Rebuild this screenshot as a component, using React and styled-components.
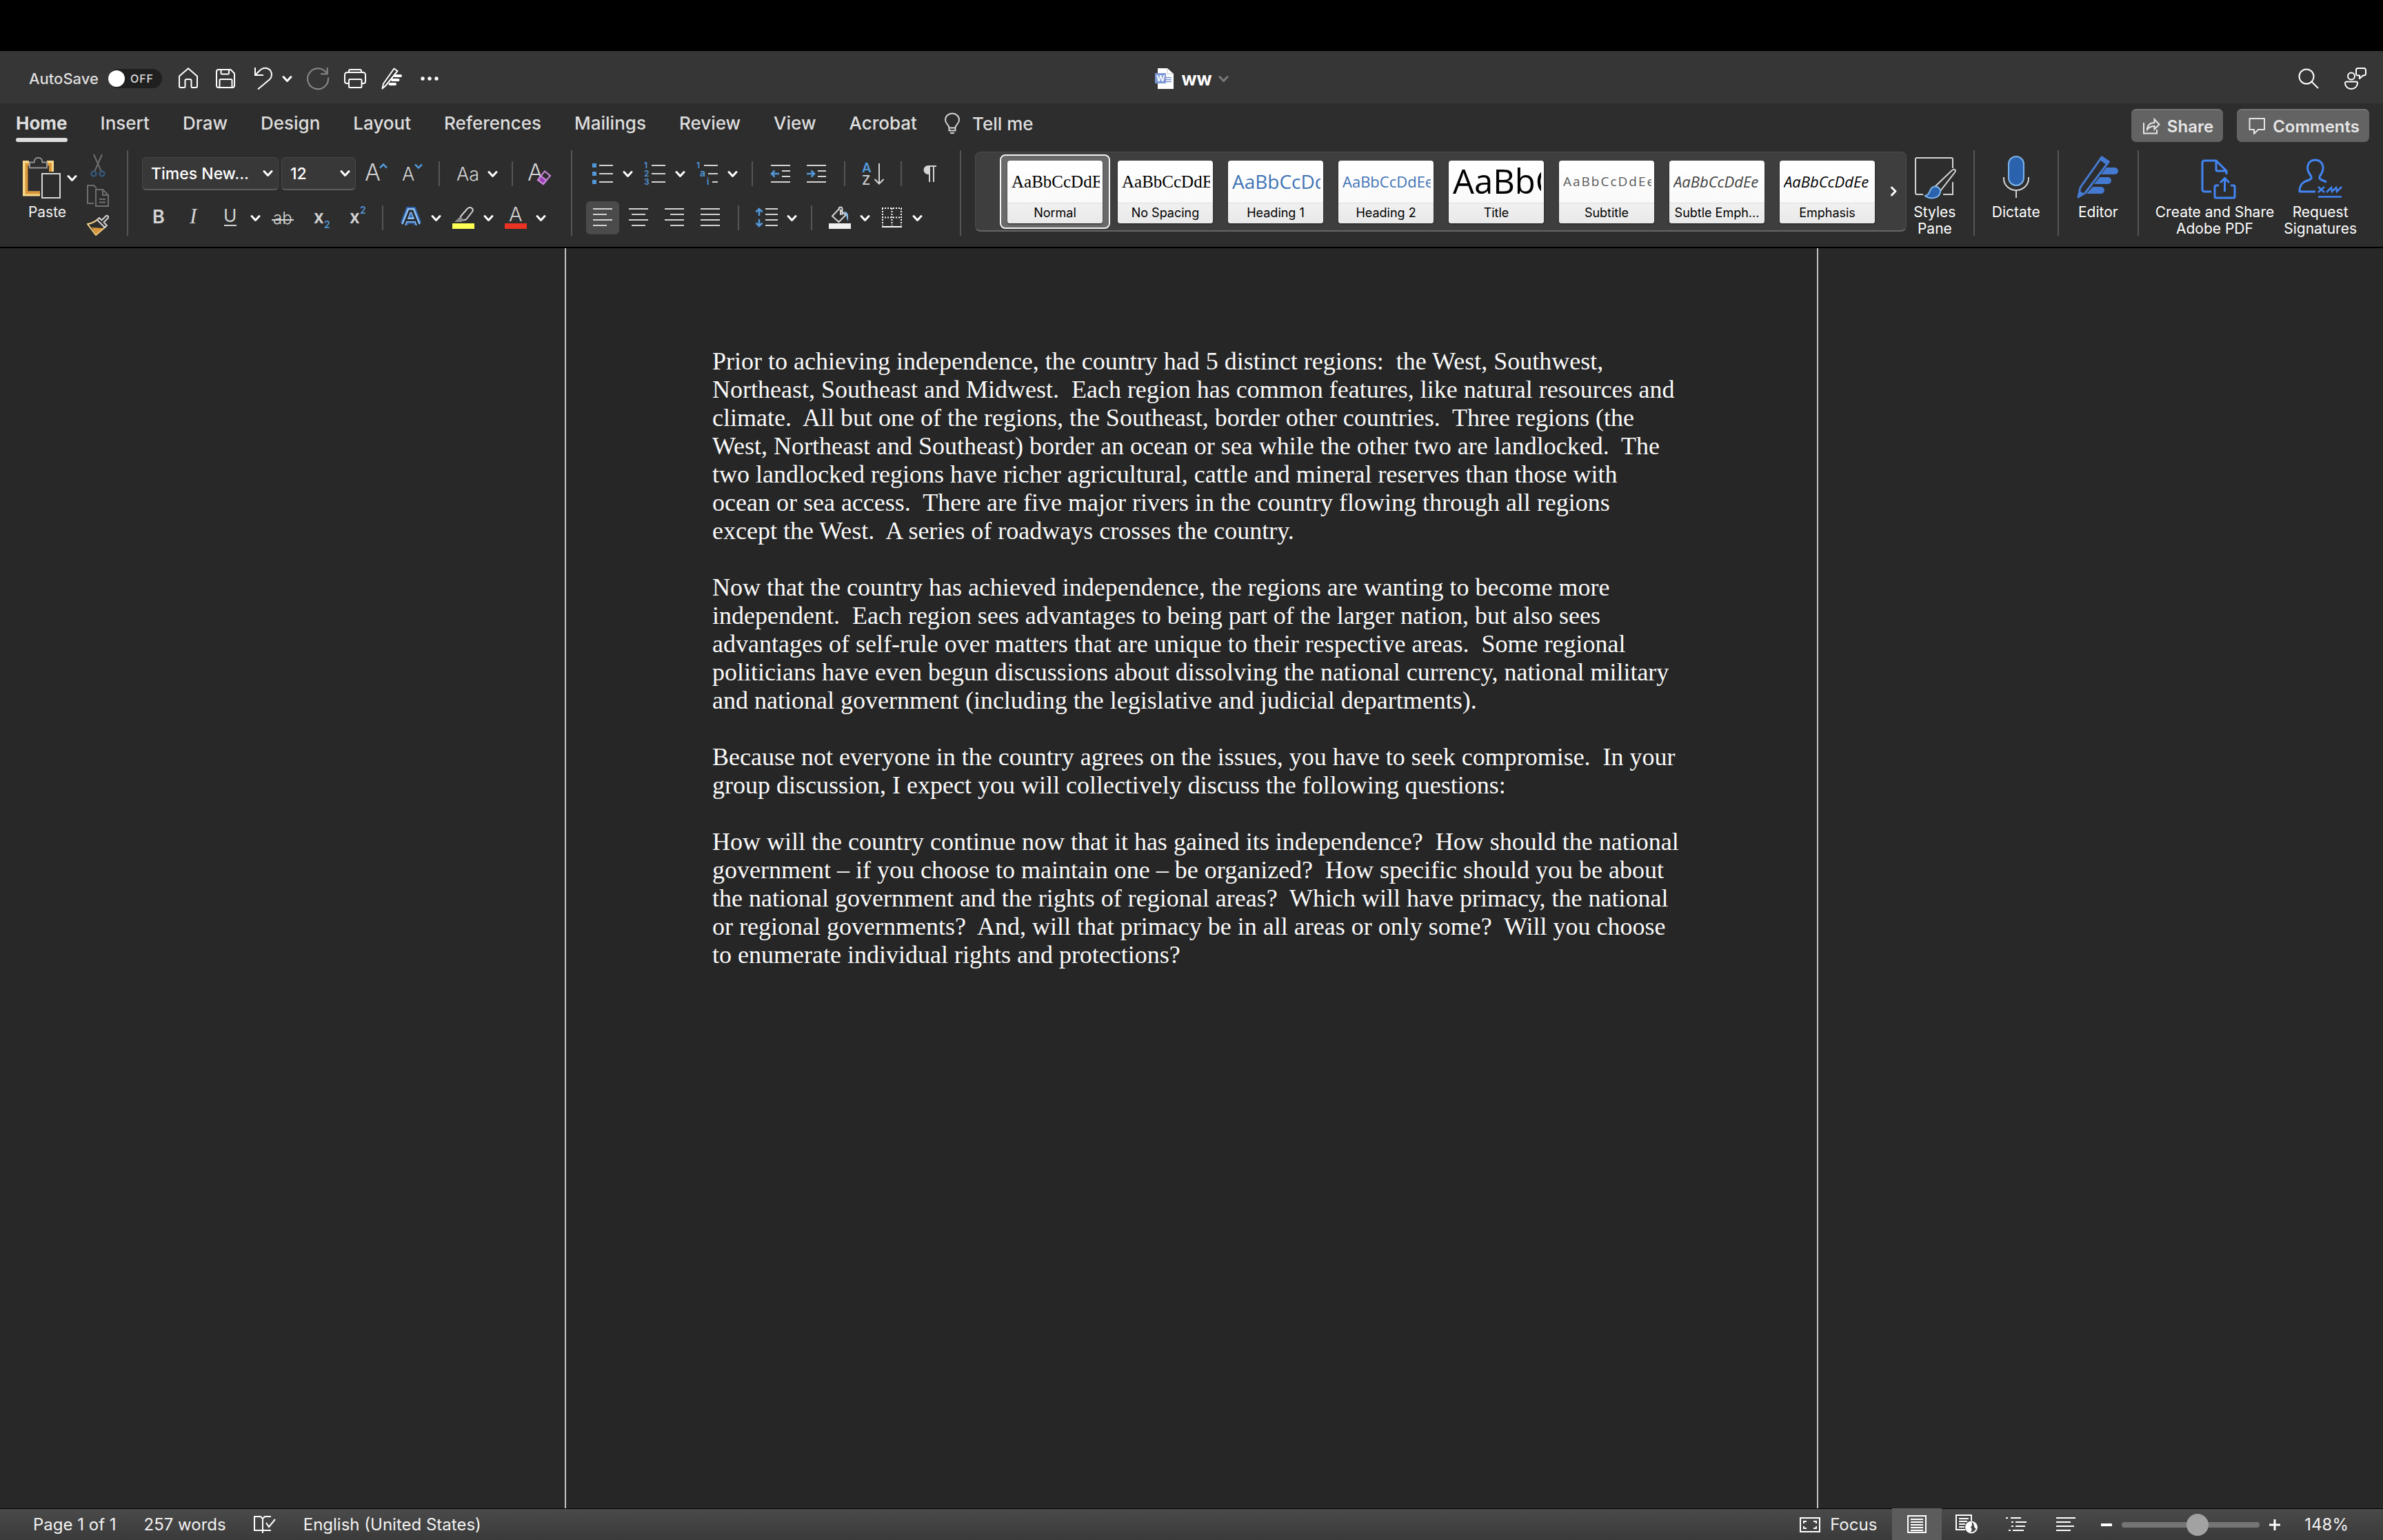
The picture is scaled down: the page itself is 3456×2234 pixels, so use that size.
import React from "react";
import styled, { createGlobalStyle, css } from "styled-components";

const color = {
  bar: "#363636",
  ribbon: "#2d2d2d",
  canvas: "#282828",
  page: "#262626",
  line: "#555555",
  text: "#f2f2f2",
  tab: "#dedede",
  icon: "#d4d4d4",
  blue: "#5298d8",
  adobe: "#4285f4",
};

const GlobalStyle = createGlobalStyle`
  * { box-sizing: border-box; }
  body { margin: 0; background: #000; }
  button, select, input { font: inherit; color: inherit; margin: 0; }
`;

/* ---------- frame ---------- */

const Window = styled.div`
  display: flex;
  flex-direction: column;
  min-height: 100vh;
  font-family: Inter, "Liberation Sans", sans-serif;
  color: ${color.text};
  background: ${color.canvas};
`;

const MenuStrip = styled.div`
  height: 74px;
  background: #000;
`;

const TitleBar = styled.header`
  display: grid;
  grid-template-columns: 1fr auto 1fr;
  align-items: center;
  height: 76px;
  padding: 4px 24px 0;
  background: ${color.bar};
`;

const QuickAccess = styled.div`
  display: flex;
  align-items: center;
  gap: 22px;
  padding-left: 18px;
`;

const TitleActions = styled(QuickAccess)`
  justify-content: flex-end;
  gap: 36px;
`;

const bare = css`
  display: flex;
  align-items: center;
  justify-content: center;
  padding: 0;
  border: 0;
  background: none;
`;

const PlainButton = styled.button`
  ${bare}
  gap: 13px;
`;

const AutoSave = styled.label`
  display: flex;
  align-items: center;
  gap: 14px;
  font-size: 22px;
  font-weight: 500;
  color: ${color.tab};
`;

const Switch = styled.span`
  display: flex;
  align-items: center;
  gap: 8px;
  width: 78px;
  height: 28px;
  padding: 0 2px 0 0;
  border-radius: 14px;
  background: #1f1f1f;
  font-size: 16px;
  letter-spacing: 1px;
`;

const SwitchKnob = styled.input`
  appearance: none;
  width: 24px;
  height: 24px;
  border-radius: 50%;
  background: #fff;
`;

const DocumentTitle = styled.div`
  display: flex;
  align-items: center;
  gap: 10px;
  font-size: 26px;
  font-weight: 700;
  color: #fff;
`;

/* ---------- tabs ---------- */

const TabBar = styled.nav`
  display: flex;
  align-items: flex-start;
  height: 68px;
  padding: 0 20px 0 23px;
  background: ${color.ribbon};
`;

const TabList = styled.div`
  display: flex;
  flex: 1;
  gap: 48px;
`;

const Tab = styled.button`
  padding: 13px 0 0;
  border: 0;
  background: none;
  font-size: 26px;
  line-height: 32px;
  font-weight: ${(p) => (p.$active ? 700 : 500)};
  color: ${color.tab};
  &::after {
    content: "";
    display: block;
    height: 6px;
    margin-top: 5px;
    border-radius: 3px;
    background: ${(p) => (p.$active ? color.tab : "transparent")};
  }
`;

const TellMe = styled.button`
  ${bare}
  gap: 18px;
  height: 32px;
  margin: 13px 0 0 -8px;
  font-size: 26px;
  font-weight: 500;
  color: ${color.tab};
`;

const TabActions = styled.div`
  display: flex;
  gap: 20px;
  padding-top: 8px;
`;

const ActionButton = styled.button`
  ${bare}
  gap: 11px;
  height: 48px;
  padding: 0 14px 0 17px;
  border-top: 2px solid #757575;
  border-radius: 7px;
  background: #636363;
  font-size: 24px;
  font-weight: 600;
  color: #e6e6e6;
`;

/* ---------- ribbon ---------- */

const Ribbon = styled.div`
  display: flex;
  height: 142px;
  padding-bottom: 16px;
  border-bottom: 2px solid #000;
  background: ${color.ribbon};
`;

const Group = styled.section`
  display: flex;
  flex: none;
  gap: ${(p) => p.$gap || 0}px;
  padding: ${(p) => p.$pad || "0 20px"};
  border-right: ${(p) => (p.$last ? "0" : `2px solid ${color.line}`)};
`;

const PasteButton = styled.button`
  ${bare}
  flex-direction: column;
  justify-content: flex-start;
  gap: 6px;
  padding-top: 8px;
  font-size: 21px;
  line-height: 24px;
`;

const PasteIcons = styled.span`
  display: flex;
  align-items: center;
  gap: 10px;
  height: 64px;
`;

const PasteLabel = styled.span`
  padding-right: 8px;
`;

const ClipStack = styled.div`
  display: flex;
  flex-direction: column;
  gap: 12px;
  padding-top: 6px;
`;

const ToolRows = styled.div`
  display: flex;
  flex-direction: column;
  gap: 16px;
  padding-top: 10px;
`;

const ToolRow = styled.div`
  display: flex;
  align-items: center;
  gap: 4px;
  height: 48px;
`;

const ToolButton = styled.button`
  ${bare}
  width: 48px;
  height: 48px;
  border-radius: 6px;
  background: ${(p) => (p.$on ? "#4b4b4b" : "none")};
`;

const SplitButton = styled.button`
  ${bare}
  gap: 14px;
  height: 48px;
  padding: 0 5px 0 8px;
`;

const Rule = styled.span`
  width: 2px;
  height: 36px;
  margin: 0 12px;
  background: ${color.line};
`;

const Combo = styled.span`
  display: flex;
  align-items: center;
  width: ${(p) => p.$w}px;
  height: 48px;
  padding: 0 8px 0 12px;
  border: 1px solid #474747;
  border-bottom: 2px solid #5c5c5c;
  border-radius: 6px;
  background: #383838;
  & > select {
    flex: 1;
    min-width: 0;
    appearance: none;
    border: 0;
    padding: 0;
    background: none;
    font-size: 23px;
    font-weight: 500;
    color: #fff;
  }
`;

/* ---------- style gallery ---------- */

const Gallery = styled.div`
  display: flex;
  flex: 1;
  min-width: 0;
  height: 116px;
  margin: 2px 0 0 20px;
  padding-left: 35px;
  border: 1px solid #4c4c4c;
  border-bottom: 2px solid #666;
  border-radius: 8px;
  background: #3e3e3e;
`;

const StyleList = styled.div`
  display: flex;
  flex: 1;
  min-width: 0;
  overflow: hidden;
  padding-top: 3px;
`;

const StyleItem = styled.button`
  flex: none;
  width: 160px;
  height: 108px;
  padding: 7px 9px 8px;
  border: 2px solid ${(p) => (p.$on ? "#f2f2f2" : "transparent")};
  border-radius: 8px;
  background: ${(p) => (p.$on ? "#6a6a6a" : "none")};
`;

const StyleCard = styled.span`
  display: flex;
  flex-direction: column;
  height: 91px;
  border-radius: 4px;
  overflow: hidden;
  background: linear-gradient(#ffffff, #f7f7f7);
  box-shadow: 0 1px 2px #1c1c1c;
`;

const looks = {
  serif: css`font: 25px/61px "Liberation Serif", serif; color: #000;`,
  heading1: css`font: 28px/61px "Open Sans", sans-serif; color: #3f74b5;`,
  heading2: css`font: 22px/61px "Open Sans", sans-serif; color: #3f74b5;`,
  title: css`font: 49px/58px "Open Sans", sans-serif; color: #000;`,
  subtitle: css`font: 19px/61px "Open Sans", sans-serif; letter-spacing: 2px; color: #5a5a5a;`,
  subtle: css`font: italic 22px/61px "Open Sans", sans-serif; color: #404040;`,
  emphasis: css`font: italic 500 22px/61px "Open Sans", sans-serif; color: #000;`,
};

const Sample = styled.span`
  height: 61px;
  margin: 0 4px 0 6px;
  overflow: hidden;
  white-space: nowrap;
  text-align: left;
  ${(p) => looks[p.$look]}
`;

const StyleName = styled.span`
  flex: 1;
  border-top: 1px solid #dcdcdc;
  background: linear-gradient(#f0f0f0, #e9e9e9);
  font-size: 18px;
  line-height: 27px;
  text-align: center;
  color: #000;
`;

const MoreStyles = styled.button`
  ${bare}
  width: 35px;
`;

const Command = styled.button`
  ${bare}
  flex-direction: column;
  justify-content: flex-start;
  gap: 6px;
  padding-top: 8px;
  font-size: 21px;
  line-height: 24px;
  white-space: pre;
  color: #fff;
`;

/* ---------- document ---------- */

const Canvas = styled.main`
  display: flex;
  flex: 1;
  justify-content: center;
`;

const Page = styled.article`
  width: 1818px;
  padding: 144px 0 0 212px;
  border: solid #c4c4c4;
  border-width: 0 2px;
  background: ${color.page};
`;

const Paragraph = styled.p`
  margin: 0 0 41px;
  font: 36px/41px "Liberation Serif", "Times New Roman", serif;
  white-space: pre;
  color: #fafafa;
`;

/* ---------- status bar ---------- */

const StatusBar = styled.footer`
  display: flex;
  justify-content: space-between;
  height: 46px;
  padding: 0 50px 0 48px;
  border-top: 1px solid #000;
  background: linear-gradient(#4a4a4a, #3a3a3a);
  font-size: 24px;
`;

const StatusGroup = styled.div`
  display: flex;
  align-items: center;
  gap: ${(p) => p.$gap || 0}px;
`;

const FocusButton = styled.button`
  ${bare}
  gap: 14px;
  margin-right: 22px;
`;

const ViewButton = styled.button`
  ${bare}
  width: 72px;
  height: 46px;
  margin-top: -1px;
  background: ${(p) => (p.$on ? "#5c5c5c" : "none")};
`;

const ZoomControl = styled.div`
  display: flex;
  align-items: center;
  gap: 14px;
  margin: 0 35px 0 15px;
`;

const ZoomSlider = styled.input`
  appearance: none;
  width: 200px;
  height: 8px;
  border-radius: 4px;
  background: #757575;
  &::-webkit-slider-thumb {
    appearance: none;
    width: 32px;
    height: 32px;
    border-radius: 50%;
    background: #a2a2a2;
  }
`;

/* ---------- icons ---------- */

const Svg = styled.svg`
  display: block;
  flex: none;
  fill: none;
  stroke: ${(p) => p.$c || "#fff"};
  stroke-width: ${(p) => p.$s || 2};
  overflow: visible;
`;

const Letter = styled.text`
  font-family: ${(p) => p.$f || "Inter, sans-serif"};
  font-size: ${(p) => p.$size}px;
  font-weight: ${(p) => p.$w || 400};
  font-style: ${(p) => (p.$i ? "italic" : "normal")};
  fill: ${(p) => p.$c || color.icon};
  stroke: none;
`;

const Icon = ({ w = 32, h = 32, c, s, children }) => (
  <Svg width={w} height={h} viewBox={`0 0 ${w} ${h}`} $c={c} $s={s} aria-hidden="true">
    {children}
  </Svg>
);

const Chevron = ({ c = "#fff" }) => (
  <Icon w={13} h={9} c={c} s={3}>
    <path d="M1 1.5 6.5 7.5 12 1.5" strokeLinejoin="round" strokeLinecap="round" />
  </Icon>
);

const HomeIcon = () => (
  <Icon>
    <path d="M3 12.5 16 1.2 29 12.5V27a2 2 0 0 1-2 2h-5a1.5 1.5 0 0 1-1.5-1.5V19a2 2 0 0 0-2-2h-5a2 2 0 0 0-2 2v8.5A1.5 1.5 0 0 1 10 29H5a2 2 0 0 1-2-2Z" strokeLinejoin="round" />
  </Icon>
);
const SaveIcon = () => (
  <Icon>
    <path d="M6 3h17.5L29 8.500V26a3 3 0 0 1-3 3H6a3 3 0 0 1-3-3V6a3 3 0 0 1 3-3Z" strokeLinejoin="round" />
    <path d="M9.500 3v5a1.500 1.500 0 0 0 1.500 1.500h8.500A1.500 1.500 0 0 0 21 8V3M7.500 29V18.500A1.500 1.500 0 0 1 9 17h15a1.500 1.500 0 0 1 1.500 1.500V29" />
  </Icon>
);
const UndoIcon = () => (
  <Icon>
    <path d="M5 0v11h12M5.500 10.500 11 5C16-.5 23-.5 27 4c3 4 2.800 9.500-1 13.200L9 31.500" />
  </Icon>
);
const RedoIcon = () => (
  <Icon c="#8a8a8a">
    <path d="M31 14.500A15 15 0 1 1 28.300 7.500M29.700 0v9.300H20" />
  </Icon>
);
const PrintIcon = () => (
  <Icon>
    <path d="M7 7V5a2 2 0 0 1 2-2h14a2 2 0 0 1 2 2v2M6.500 23H4a3 3 0 0 1-3-3v-9.500A3.500 3.500 0 0 1 4.500 7h23a3.500 3.500 0 0 1 3.500 3.500V20a3 3 0 0 1-3 3h-2.500" />
    <rect x="7" y="17" width="18.500" height="12" rx="1.500" />
  </Icon>
);
const PenIcon = () => (
  <Icon>
    <path d="M18.500 1.500 23.500 5 6.500 26 1.500 30.500 3 23.500Z" strokeLinejoin="round" />
    <path d="M20 12h8M16 18h8.500M12.500 24H20" strokeWidth="4" strokeLinecap="round" />
  </Icon>
);
const DotsIcon = () => (
  <Icon>
    <g fill="#fff" stroke="none">
      <circle cx="6" cy="16" r="2.700" />
      <circle cx="16" cy="16" r="2.700" />
      <circle cx="26" cy="16" r="2.700" />
    </g>
  </Icon>
);
const WordFileIcon = () => (
  <Icon w={28} h={30}>
    <path d="M4 0h14l9 8v22H4Z" fill="#fff" stroke="none" />
    <path d="M18 0v8h9" stroke="#c9c9c9" strokeWidth="1" />
    <path d="M15 13.500h9M15 16.500h9M15 19.500h9" stroke="#7d98d6" strokeWidth="1.500" />
    <rect x="0" y="7" width="16" height="15" rx="1" fill="#7d98d6" stroke="none" />
    <Letter x="2" y="19" $size={12} $w={700} $c="#fff">W</Letter>
  </Icon>
);
const SearchIcon = () => (
  <Icon s={2}>
    <circle cx="13" cy="13" r="10.500" />
    <path d="M20.500 20.500 30 30" />
  </Icon>
);
const PersonIcon = () => (
  <Icon>
    <circle cx="10" cy="12.500" r="5" />
    <path d="M3 20.500h14a2 2 0 0 1 2 2c0 5-4 8.500-9 8.500s-9-3.500-9-8.500a2 2 0 0 1 2-2ZM19.500 1h9A2.500 2.500 0 0 1 31 3.500V9a2.500 2.500 0 0 1-2.500 2.500H27L22 16v-4.500h-2A2.500 2.500 0 0 1 17 9V3.500A2.500 2.500 0 0 1 19.500 1Z" strokeLinejoin="round" />
  </Icon>
);
const BulbIcon = () => (
  <Icon w={22} h={30} c={color.icon}>
    <path d="M6.500 21.500C6 16.500 1 15.500 1 10a10 9.500 0 0 1 20 0c0 5.500-5 6.500-5.500 11.500ZM6.500 21.500v4h9v-4M8 29h6" />
  </Icon>
);
const ShareIcon = () => (
  <Icon w={24} h={24} c="#e6e6e6">
    <path d="M1 7v15.500h19V17M6 15.500C7 10 11 7 16.500 7V2l7 7.500-7 7V12C12 12 9 13 6 17Z" />
  </Icon>
);
const CommentIcon = () => (
  <Icon w={24} h={24} c="#e6e6e6">
    <path d="M1.500 1h21.500v16H14l-6 6v-6H1.500Z" strokeLinejoin="round" />
  </Icon>
);

const ClipboardIcon = () => (
  <Icon w={54} h={62}>
    <path d="M8 9.500H2.500V54H24M34 9.500h6.500V22" stroke="#f8d888" strokeWidth="7" />
    <path d="M8 11.500H4.500V52.500H24M34 11.500h5V22" stroke="#d9963b" strokeWidth="4" />
    <path d="M9 8.500h6.500c0-9 12-9 12 0H34v8H9Z" stroke="#949494" strokeWidth="2" fill={color.ribbon} />
    <rect x="27" y="25" width="26" height="35" fill={color.ribbon} stroke="#d8d8d8" />
  </Icon>
);
const CutIcon = () => (
  <Icon c="#6e6e6e" s={2}>
    <path d="M10 0 21 25M22 0 11 25" />
    <g stroke="#35577a" strokeWidth="2.500">
      <circle cx="10" cy="28" r="3.500" />
      <circle cx="22" cy="28" r="3.500" />
    </g>
  </Icon>
);
const CopyIcon = () => (
  <Icon c="#6e6e6e">
    <path d="M10 27H1V1h9l4 4M13 7h10l8 8v16H13ZM23 7v8h8M18 21h9M18 25.500h9" />
  </Icon>
);
const BrushIcon = () => (
  <Icon>
    <path d="M1 13 13 29 27 17 17 5C12 10 7 12 1 13Z" fill="#2d2d2d" stroke="#f8d888" strokeLinejoin="round" />
    <path d="M7 18l17 1-11 9Z" fill="#d9963b" stroke="none" />
    <path d="M15 7 26 18l3-3-4.500-4.500 6-6a2 2 0 0 0-3-3l-6 6L18 4Z" fill={color.ribbon} stroke={color.icon} strokeLinejoin="round" />
  </Icon>
);

const GrowIcon = () => (
  <Icon>
    <Letter x="1" y="26" $size={34} $w={300}>A</Letter>
    <path d="M23 7.500 28 2.500 33 7.500" stroke={color.blue} strokeWidth="2.500" />
  </Icon>
);
const ShrinkIcon = () => (
  <Icon>
    <Letter x="3" y="26" $size={27} $w={300}>A</Letter>
    <path d="M22 2.500 27 7.500 32 2.500" stroke={color.blue} strokeWidth="2.500" />
  </Icon>
);
const CaseIcon = () => (
  <Icon>
    <Letter x="0" y="26" $size={27} $w={300}>Aa</Letter>
  </Icon>
);
const ClearIcon = () => (
  <Icon>
    <Letter x="-3" y="26" $size={34} $w={300}>A</Letter>
    <path d="M22 12.500 30 19 20 31 12 25Z" fill={color.ribbon} stroke="#cf8be0" />
    <path d="M16.500 19.500 24.500 25.500 20 31 12 25Z" fill="#9a3fb5" stroke="#cf8be0" />
  </Icon>
);
const BoldIcon = () => (
  <Icon><Letter x="7" y="24" $size={27} $w={600}>B</Letter></Icon>
);
const ItalicIcon = () => (
  <Icon><Letter x="9" y="24" $size={31} $i $f='"Liberation Serif", serif'>I</Letter></Icon>
);
const UnderlineIcon = () => (
  <Icon>
    <Letter x="6" y="22" $size={26} $w={400}>U</Letter>
    <path d="M7 27h18" stroke={color.icon} />
  </Icon>
);
const StrikeIcon = () => (
  <Icon>
    <Letter x="2" y="25" $size={24} $w={300}>ab</Letter>
    <path d="M0 19h32" stroke={color.icon} />
  </Icon>
);
const SubIcon = () => (
  <Icon>
    <Letter x="9" y="24" $size={26} $w={600}>x</Letter>
    <Letter x="24" y="31" $size={14} $w={600} $c={color.blue}>2</Letter>
  </Icon>
);
const SuperIcon = () => (
  <Icon>
    <Letter x="9" y="24" $size={26} $w={600}>x</Letter>
    <Letter x="24" y="10" $size={14} $w={600} $c={color.blue}>2</Letter>
  </Icon>
);
const EffectsIcon = () => (
  <Icon>
    <g strokeLinejoin="miter">
      <path d="M6 25 13.500 5.500h5L26 25M10 19h12" stroke="#2f66b4" strokeWidth="11" />
      <path d="M5.500 26 13.500 5.500h5L26.500 26M10 19h12" stroke="#8fc0f0" strokeWidth="7" />
      <path d="M5.500 27 14 6h4L26.500 27M10 19.500h12" stroke="#262b33" strokeWidth="3" />
    </g>
  </Icon>
);
const HighlightIcon = () => (
  <Icon c={color.icon}>
    <path d="M12 14 22 2.500C26-1 32 3 29 7L20 18.500 13 20Z" strokeLinejoin="round" />
    <path d="M11 14.500 17 19 13 22H3Z" fill="#8c8c8c" stroke="none" />
    <rect y="24" width="32" height="8" fill="#ffff54" stroke="none" />
  </Icon>
);
const FontColorIcon = () => (
  <Icon>
    <Letter x="6" y="21" $size={29} $w={300}>A</Letter>
    <rect y="24" width="32" height="8" fill="#ea3323" stroke="none" />
  </Icon>
);

const BulletsIcon = () => (
  <Icon c={color.icon}>
    <path d="M11 4h20M11 16h20M11 28h20" />
    <path d="M1 4h6M1 16h6M1 28h6" stroke={color.blue} strokeWidth="6" />
  </Icon>
);
const NumbersIcon = () => (
  <Icon c={color.icon}>
    <path d="M11 4h20M11 16h20M11 28h20" />
    <Letter x="0" y="8" $size={12} $w={600} $c={color.blue}>1</Letter>
    <Letter x="0" y="20" $size={12} $w={600} $c={color.blue}>2</Letter>
    <Letter x="0" y="32" $size={12} $w={600} $c={color.blue}>3</Letter>
  </Icon>
);
const MultiIcon = () => (
  <Icon c={color.icon}>
    <path d="M11 4h20M17 16h14M23 28h8" />
    <Letter x="0" y="8" $size={12} $w={600} $c={color.blue}>1</Letter>
    <Letter x="5" y="20" $size={14} $w={600} $c={color.blue}>a</Letter>
    <Letter x="15" y="32" $size={13} $w={600} $c={color.blue}>i</Letter>
  </Icon>
);
const OutdentIcon = () => (
  <Icon c={color.icon}>
    <path d="M2 4h28M18 12h12M18 20h12M2 28h28" />
    <path d="M14 16H3M7.500 11.500 3 16l4.500 4.500" stroke={color.blue} strokeWidth="2.500" />
  </Icon>
);
const IndentIcon = () => (
  <Icon c={color.icon}>
    <path d="M2 4h28M18 12h12M18 20h12M2 28h28" />
    <path d="M2 16h11M8.500 11.500 13 16l-4.500 4.500" stroke={color.blue} strokeWidth="2.500" />
  </Icon>
);
const SortIcon = () => (
  <Icon c={color.icon}>
    <Letter x="0" y="14" $size={19} $w={600} $c={color.blue}>A</Letter>
    <Letter x="0" y="32" $size={19} $w={500}>Z</Letter>
    <path d="M25 1v29M18.500 24 25 30.500 31.500 24" />
  </Icon>
);
const PilcrowIcon = () => (
  <Icon c={color.icon}>
    <path d="M26 5H14M16 5v23M22 5v23" />
    <path d="M16 4h-2a6.500 6.500 0 0 0 0 13h2Z" fill={color.icon} stroke="none" />
  </Icon>
);
const alignPaths = {
  left: "M2 3h28M2 11h20M2 19h28M2 27h20",
  center: "M2 3h28M6 11h20M2 19h28M6 27h20",
  right: "M2 3h28M10 11h20M2 19h28M10 27h20",
  justify: "M2 3h28M2 11h28M2 19h28M2 27h28",
};
const AlignIcon = ({ kind }) => (
  <Icon c={color.icon}><path d={alignPaths[kind]} /></Icon>
);
const SpacingIcon = () => (
  <Icon c={color.icon}>
    <path d="M14 3h18M14 11h18M14 19h18M14 27h18" />
    <path d="M5 13V3M.5 7.500 5 3l4.500 4.500M5 18v10M.5 23.500 5 28l4.500-4.500" stroke={color.blue} strokeWidth="2.500" />
  </Icon>
);
const BucketIcon = () => (
  <Icon c={color.icon}>
    <path d="M14 4 5 13.500l9.500 8.500 10-10L17 5V12M14.500 5V3a2 2 0 0 1 5 0v9" />
    <path d="M22 7c6 0 7 5 5.500 14-2-4-1-8-3-9Z" fill="#8fc0f0" stroke="none" />
    <rect y="24" width="32" height="8" fill="#f0f0f0" stroke="none" />
  </Icon>
);
const BordersIcon = () => (
  <Icon>
    <path d="M1 2h29M1 15.500h29M2 2v25M15.500 2v25M29 2v25" strokeDasharray="2 2" />
    <path d="M1 29h29" />
  </Icon>
);

const StylesPaneIcon = () => (
  <Icon w={64} h={64} c={color.icon}>
    <path d="M15 56H6a2 2 0 0 1-2-2V5a2 2 0 0 1 2-2h50a2 2 0 0 1 2 2v13M58 38v18H44" />
    <path d="M33 44 57 21c4-3 6 0 4 3L40 51Z" fill={color.ribbon} />
    <path d="M18 58c8-1 5-10 12-13 6-2 11 3 10 8-2 9-15 11-22 5Z" fill="#2b62ae" stroke="#7db4ea" />
  </Icon>
);
const MicIcon = () => (
  <Icon w={64} h={64} c={color.icon}>
    <path d="M14 31v2a18 17 0 0 0 36 0v-2M32 50v11" />
    <rect x="21" y="1" width="22" height="42" rx="11" fill="#2b62ae" stroke="#7db4ea" />
  </Icon>
);
const EditorIcon = () => (
  <Icon w={64} h={64} c="#447ad0">
    <path d="M37 2 47 9 13 54 3 60 6 46Z" strokeWidth="3" strokeLinejoin="round" fill={color.ribbon} />
    <path d="M37 0 49 8 45 14 33 5Z M2 61 5 51 12 55Z" fill="#447ad0" stroke="none" />
    <path d="M44 17H56a5 5 0 0 1 0 10H36ZM34 31H46a5 5 0 0 1 0 10H26ZM24 45H36a5 5 0 0 1 0 10H15Z" fill="#447ad0" stroke="none" />
  </Icon>
);
const PdfIcon = () => (
  <Icon w={64} h={64} c={color.adobe} s={3}>
    <path d="M27 52H17a3 3 0 0 1-3-3V10a3 3 0 0 1 3-3h17l15 15v5M34 7v13a2 2 0 0 0 2 2h13" strokeLinejoin="round" />
    <path d="M38 43h-4a2 2 0 0 0-2 2v14a2 2 0 0 0 2 2h25a2 2 0 0 0 2-2V45a2 2 0 0 0-2-2h-4M46.500 52V33M40 39l6.500-6.500L53 39" />
  </Icon>
);
const SignIcon = () => (
  <Icon w={64} h={64} c={color.adobe} s={3}>
    <path d="M25 52H2c0-10 4-14 14-17 4-2 4-4 1-8-6-8-4-20 7-21 12 0 15 12 9 21-3 4-3 6 1 8l7 3" strokeLinejoin="round" />
    <path d="M29 45l9 8M38 45l-9 8M41 53l7-7 1 6 6-6 1 6 7-7M29 59.500h34" strokeWidth="2.500" />
  </Icon>
);

const ProofIcon = () => (
  <Icon w={32} h={26}>
    <path d="M13 21H1V1h9l3 3v21M13 4l3-3h9M13 21h12M18 10l4 6L31 5" />
  </Icon>
);
const FocusIcon = () => (
  <Icon w={30} h={22}>
    <rect x="1" y="1" width="28" height="20" />
    <path d="M6 9V6h4M20 6h4v3M6 13v3h4M20 16h4v-3" />
  </Icon>
);
const PrintViewIcon = () => (
  <Icon w={28} h={26}>
    <rect x="1" y="1" width="26" height="24" />
    <path d="M5 6h18M5 10h18M5 14h18M5 18h18M5 22h18" />
  </Icon>
);
const WebViewIcon = () => (
  <Icon w={32} h={28}>
    <path d="M14 22H1V1h22v8M5 6h14M5 10h12M5 14h9M5 18h8" />
    <circle cx="23" cy="18.500" r="8" fill="#444" />
    <path d="M16 14c4-5 9-3 8 1s-3 3-1 5-1 5-2 6c-4-2-6-6-5-12ZM25 11c5 1 7 4 6 9-5 1-3-4-6-9Z" fill="#fff" stroke="none" />
  </Icon>
);
const OutlineIcon = () => (
  <Icon w={30} h={22}>
    <path d="M0 2h3M7 2h15M8 8h3M14 8h16M8 14h3M14 14h14M4 20h3M10 20h16" />
  </Icon>
);
const DraftIcon = () => (
  <Icon w={28} h={22}><path d="M0 2h28M0 8h21M0 14h26M0 20h21" /></Icon>
);
const MinusIcon = () => (
  <Icon w={16} h={16} s={4}><path d="M0 8h16" /></Icon>
);
const PlusIcon = () => (
  <Icon w={16} h={16} s={3}><path d="M0 8h16M8 0v16" /></Icon>
);
const NextIcon = () => (
  <Icon w={9} h={13} s={3}><path d="M1.500 1 7 6.500 1.500 12" strokeLinejoin="round" strokeLinecap="round" /></Icon>
);

/* ---------- content ---------- */

const tabs = ["Home", "Insert", "Draw", "Design", "Layout", "References", "Mailings", "Review", "View", "Acrobat"];

const styleCards = [
  ["Normal", "serif"],
  ["No Spacing", "serif"],
  ["Heading 1", "heading1"],
  ["Heading 2", "heading2"],
  ["Title", "title"],
  ["Subtitle", "subtitle"],
  ["Subtle Emph...", "subtle"],
  ["Emphasis", "emphasis"],
];

const paragraphs = [
  [
    "Prior to achieving independence, the country had 5 distinct regions:  the West, Southwest,",
    "Northeast, Southeast and Midwest.  Each region has common features, like natural resources and",
    "climate.  All but one of the regions, the Southeast, border other countries.  Three regions (the",
    "West, Northeast and Southeast) border an ocean or sea while the other two are landlocked.  The",
    "two landlocked regions have richer agricultural, cattle and mineral reserves than those with",
    "ocean or sea access.  There are five major rivers in the country flowing through all regions",
    "except the West.  A series of roadways crosses the country.",
  ],
  [
    "Now that the country has achieved independence, the regions are wanting to become more",
    "independent.  Each region sees advantages to being part of the larger nation, but also sees",
    "advantages of self-rule over matters that are unique to their respective areas.  Some regional",
    "politicians have even begun discussions about dissolving the national currency, national military",
    "and national government (including the legislative and judicial departments).",
  ],
  [
    "Because not everyone in the country agrees on the issues, you have to seek compromise.  In your",
    "group discussion, I expect you will collectively discuss the following questions:",
  ],
  [
    "How will the country continue now that it has gained its independence?  How should the national",
    "government – if you choose to maintain one – be organized?  How specific should you be about",
    "the national government and the rights of regional areas?  Which will have primacy, the national",
    "or regional governments?  And, will that primacy be in all areas or only some?  Will you choose",
    "to enumerate individual rights and protections?",
  ],
];

const Tool = ({ label, icon: Glyph, on }) => (
  <ToolButton aria-label={label} $on={on}><Glyph /></ToolButton>
);
const Split = ({ label, icon: Glyph }) => (
  <SplitButton aria-label={label}><Glyph /><Chevron /></SplitButton>
);
const Quick = ({ label, icon: Glyph, menu }) => (
  <PlainButton aria-label={label}><Glyph />{menu && <Chevron />}</PlainButton>
);

export default function App() {
  return (
    <Window>
      <GlobalStyle />
      <MenuStrip />
      <TitleBar>
        <QuickAccess>
          <AutoSave>
            AutoSave
            <Switch><SwitchKnob type="checkbox" role="switch" />OFF</Switch>
          </AutoSave>
          <Quick label="Home" icon={HomeIcon} />
          <Quick label="Save" icon={SaveIcon} />
          <Quick label="Undo" icon={UndoIcon} menu />
          <Quick label="Redo" icon={RedoIcon} />
          <Quick label="Print" icon={PrintIcon} />
          <Quick label="Editor" icon={PenIcon} />
          <Quick label="More" icon={DotsIcon} />
        </QuickAccess>
        <DocumentTitle><WordFileIcon />ww<Chevron c="#7a7a7a" /></DocumentTitle>
        <TitleActions>
          <Quick label="Search" icon={SearchIcon} />
          <Quick label="Presence" icon={PersonIcon} />
        </TitleActions>
      </TitleBar>

      <TabBar>
        <TabList>
          {tabs.map((t) => <Tab key={t} $active={t === "Home"}>{t}</Tab>)}
          <TellMe><BulbIcon />Tell me</TellMe>
        </TabList>
        <TabActions>
          <ActionButton><ShareIcon />Share</ActionButton>
          <ActionButton><CommentIcon />Comments</ActionButton>
        </TabActions>
      </TabBar>

      <Ribbon>
        <Group $pad="0 26px 0 34px" $gap={15}>
          <PasteButton>
            <PasteIcons><ClipboardIcon /><Chevron /></PasteIcons>
            <PasteLabel>Paste</PasteLabel>
          </PasteButton>
          <ClipStack>
            <PlainButton aria-label="Cut"><CutIcon /></PlainButton>
            <PlainButton aria-label="Copy"><CopyIcon /></PlainButton>
            <PlainButton aria-label="Format Painter"><BrushIcon /></PlainButton>
          </ClipStack>
        </Group>

        <Group>
          <ToolRows>
            <ToolRow>
              <Combo $w={198}>
                <select aria-label="Font"><option>Times New...</option></select>
                <Chevron />
              </Combo>
              <Combo $w={108}>
                <select aria-label="Font size"><option>12</option></select>
                <Chevron />
              </Combo>
              <Tool label="Grow font" icon={GrowIcon} />
              <Tool label="Shrink font" icon={ShrinkIcon} />
              <Rule />
              <Split label="Change case" icon={CaseIcon} />
              <Rule />
              <Tool label="Clear formatting" icon={ClearIcon} />
            </ToolRow>
            <ToolRow>
              <Tool label="Bold" icon={BoldIcon} />
              <Tool label="Italic" icon={ItalicIcon} />
              <Split label="Underline" icon={UnderlineIcon} />
              <Tool label="Strikethrough" icon={StrikeIcon} />
              <Tool label="Subscript" icon={SubIcon} />
              <Tool label="Superscript" icon={SuperIcon} />
              <Rule />
              <Split label="Text effects" icon={EffectsIcon} />
              <Split label="Highlight" icon={HighlightIcon} />
              <Split label="Font color" icon={FontColorIcon} />
            </ToolRow>
          </ToolRows>
        </Group>

        <Group>
          <ToolRows>
            <ToolRow>
              <Split label="Bullets" icon={BulletsIcon} />
              <Split label="Numbering" icon={NumbersIcon} />
              <Split label="Multilevel list" icon={MultiIcon} />
              <Rule />
              <Tool label="Decrease indent" icon={OutdentIcon} />
              <Tool label="Increase indent" icon={IndentIcon} />
              <Rule />
              <Tool label="Sort" icon={SortIcon} />
              <Rule />
              <Tool label="Show marks" icon={PilcrowIcon} />
            </ToolRow>
            <ToolRow>
              {Object.keys(alignPaths).map((k) => (
                <ToolButton key={k} aria-label={`Align ${k}`} $on={k === "left"}><AlignIcon kind={k} /></ToolButton>
              ))}
              <Rule />
              <Split label="Line spacing" icon={SpacingIcon} />
              <Rule />
              <Split label="Shading" icon={BucketIcon} />
              <Split label="Borders" icon={BordersIcon} />
            </ToolRow>
          </ToolRows>
        </Group>

        <Gallery>
          <StyleList>
            {styleCards.map(([name, look]) => (
              <StyleItem key={name} $on={name === "Normal"}>
                <StyleCard>
                  <Sample $look={look}>AaBbCcDdEe</Sample>
                  <StyleName>{name}</StyleName>
                </StyleCard>
              </StyleItem>
            ))}
          </StyleList>
          <MoreStyles aria-label="More styles"><NextIcon /></MoreStyles>
        </Gallery>

        <Group $pad="0 24px 0 9px">
          <Command><StylesPaneIcon />{"Styles\nPane"}</Command>
        </Group>
        <Group $pad="0 25px"><Command><MicIcon />Dictate</Command></Group>
        <Group $pad="0 25px"><Command><EditorIcon />Editor</Command></Group>
        <Group $pad="0 38px 0 24px" $gap={14} $last>
          <Command><PdfIcon />{"Create and Share\nAdobe PDF"}</Command>
          <Command><SignIcon />{"Request\nSignatures"}</Command>
        </Group>
      </Ribbon>

      <Canvas>
        <Page>
          {paragraphs.map((lines, i) => <Paragraph key={i}>{lines.join("\n")}</Paragraph>)}
        </Page>
      </Canvas>

      <StatusBar>
        <StatusGroup $gap={40}>
          <span>Page 1 of 1</span>
          <span>257 words</span>
          <PlainButton aria-label="Proofing"><ProofIcon /></PlainButton>
          <span>English (United States)</span>
        </StatusGroup>
        <StatusGroup>
          <FocusButton><FocusIcon />Focus</FocusButton>
          <ViewButton aria-label="Print layout" $on><PrintViewIcon /></ViewButton>
          <ViewButton aria-label="Web layout"><WebViewIcon /></ViewButton>
          <ViewButton aria-label="Outline"><OutlineIcon /></ViewButton>
          <ViewButton aria-label="Draft"><DraftIcon /></ViewButton>
          <ZoomControl>
            <PlainButton aria-label="Zoom out"><MinusIcon /></PlainButton>
            <ZoomSlider type="range" min="0" max="100" defaultValue="56" aria-label="Zoom" />
            <PlainButton aria-label="Zoom in"><PlusIcon /></PlainButton>
          </ZoomControl>
          <span>148%</span>
        </StatusGroup>
      </StatusBar>
    </Window>
  );
}
